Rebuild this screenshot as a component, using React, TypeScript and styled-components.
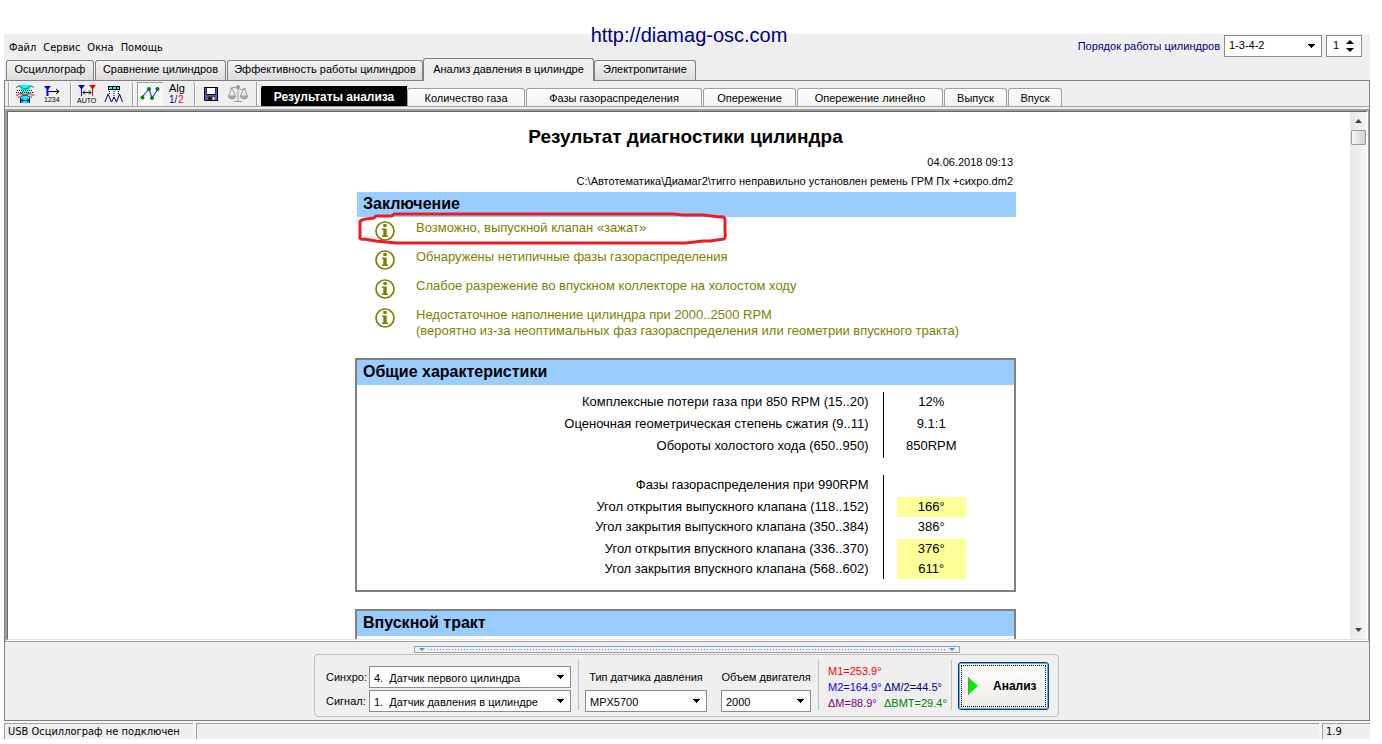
import React from "react";
import styled, { createGlobalStyle, css } from "styled-components";

const GlobalStyle = createGlobalStyle`
  *, *::before, *::after { box-sizing: border-box; }
  html, body, #root { height: 100%; }
  body { margin: 0; background: #fff; color: #000; font: 11px/16px "Liberation Sans", Arial, sans-serif; }
  button, input, select { font: inherit; color: inherit; }
  h1, h2, p, ul { margin: 0; padding: 0; }
`;

const Page = styled.div`
  position: relative;
  display: flex;
  flex-direction: column;
  height: 100%;
  padding: 34px 12px 5px 4px;
`;

const SiteLink = styled.a`
  position: absolute;
  top: 22px;
  left: 0;
  right: 4px;
  margin: 0 auto;
  width: max-content;
  font-size: 20px;
  line-height: 26px;
  color: #000080;
  text-decoration: none;
`;

const Window = styled.div`
  flex: 1;
  min-height: 0;
  display: flex;
  flex-direction: column;
  background: #efefef;
`;

const TopBar = styled.header`
  display: flex;
  justify-content: space-between;
  height: 24px;
  padding: 1px 8px 0 5px;
`;

const Menu = styled.nav`
  display: flex;
  gap: 7px;
  padding-top: 3px;
`;

const MenuItem = styled.button`
  border: 0;
  padding: 0;
  background: none;
  font-family: "DejaVu Sans Condensed", "DejaVu Sans", sans-serif;
  line-height: 16px;
`;

const OrderGroup = styled.div`
  display: flex;
  align-items: flex-start;
  gap: 4px;
`;

const OrderLabel = styled.label`
  color: #000080;
  line-height: 22px;
`;

const SelectBox = styled.span<{ $width: number }>`
  display: grid;
  align-items: center;
  width: ${(p) => p.$width}px;
  height: 22px;
  border: 1px solid #8c8c8c;
  background: #fff;

  > * { grid-area: 1 / 1; }
  > svg { justify-self: end; margin-right: 6px; pointer-events: none; }
`;

const SelectField = styled.select`
  appearance: none;
  width: 100%;
  height: 20px;
  border: 0;
  padding: 0 18px 2px 4px;
  background: transparent;
  white-space: pre;
`;

const Spinner = styled.div`
  display: flex;
  align-items: center;
  width: 36px;
  height: 22px;
  border: 1px solid #8c8c8c;
  background: #fff;
`;

const SpinnerInput = styled.input`
  width: 19px;
  border: 0;
  padding: 0 0 2px 6px;
  background: transparent;
`;

const SpinnerButtons = styled.div`
  display: flex;
  flex-direction: column;
  gap: 4px;
`;

const StepButton = styled.button`
  display: flex;
  border: 0;
  padding: 0;
  background: none;
`;

const MainTabs = styled.div`
  display: flex;
  align-items: flex-end;
  gap: 1px;
  height: 23px;
  padding: 0 2px;
  border-bottom: 1px solid #808080;
`;

const MainTab = styled.button<{ $width: number; $active?: boolean }>`
  flex: none;
  width: ${(p) => p.$width}px;
  height: 20px;
  border: 1px solid #808080;
  border-bottom: 0;
  border-radius: 3px 3px 0 0;
  padding: 0 0 2px;
  background: linear-gradient(#f4f4f4, #dcdcdc);
  line-height: 17px;

  ${(p) =>
    p.$active &&
    css`
      z-index: 1;
      height: 23px;
      margin: 0 -1px -1px;
      background: #efefef;
    `}
`;

const Workspace = styled.main`
  flex: 1;
  min-height: 0;
  display: flex;
  flex-direction: column;
  border: 1px solid #808080;
  border-top: 0;
`;

const Toolbar = styled.div`
  display: flex;
  align-items: flex-end;
  height: 26px;
  border-bottom: 1px solid #a0a0a0;
  padding-left: 3px;
`;

const ToolGroup = styled.div<{ $width: number; $gap?: number }>`
  display: flex;
  align-items: center;
  gap: ${(p) => p.$gap ?? 3}px;
  width: ${(p) => p.$width}px;
  height: 24px;
  padding-left: 4px;
  border-left: 1px solid #a0a0a0;
  box-shadow: inset 1px 0 #fff;
`;

const ToolButton = styled.button<{ $pressed?: boolean }>`
  display: grid;
  place-items: center;
  width: ${(p) => (p.$pressed ? 26 : 24)}px;
  height: 24px;
  border: 0;
  padding: 0;
  background: ${(p) =>
    p.$pressed
      ? "repeating-conic-gradient(#fff 0 25%, #efefef 0 50%) 0 0 / 2px 2px"
      : "none"};
  ${(p) => p.$pressed && "box-shadow: inset 1px 1px #a0a0a0;"}

  text { font-family: "Liberation Sans", Arial, sans-serif; }
`;

const ViewTabs = styled.div`
  display: flex;
  align-items: flex-end;
  gap: 1px;
`;

const ViewTab = styled.button<{ $width: number; $active?: boolean }>`
  flex: none;
  width: ${(p) => p.$width}px;
  height: 18px;
  border: 1px solid #a0a0a0;
  border-bottom: 0;
  border-radius: 3px 3px 0 0;
  padding: 0;
  background: linear-gradient(#fff, #f2f2f2);
  line-height: 18px;

  ${(p) =>
    p.$active &&
    css`
      height: 20px;
      margin-right: -1px;
      border-color: #000;
      border-radius: 2px 0 0 0;
      background: #000;
      color: #fff;
      font-size: 12px;
      font-weight: bold;
    `}
`;

const Frame = styled.section`
  flex: 1;
  min-height: 0;
  display: flex;
  margin-top: 2px;
  border: solid;
  border-width: 2px 1px 1px 2px;
  border-color: #a0a0a0 #a0a0a0 #fff #a0a0a0;
`;

const Viewport = styled.div`
  flex: 1;
  min-width: 0;
  display: flex;
  border: solid;
  border-width: 1px 2px 1px 1px;
  border-color: #696969 #fff #e3e3e3 #696969;
  background: #fff;
`;

const Scroller = styled.div`
  flex: 1;
  overflow: hidden;
  padding-left: 13px;
`;

const ScrollBar = styled.div`
  display: flex;
  flex-direction: column;
  align-items: center;
  width: 16px;
  padding: 7px 0;
  background: linear-gradient(90deg, #e8e8e8, #f4f4f4);
`;

const ScrollThumb = styled.div`
  width: 15px;
  height: 15px;
  margin: 7px 0 auto;
  border: 1px solid #989898;
  border-radius: 1px;
  background: linear-gradient(90deg, #f6f6f6, #d2d3d5);
`;

const Report = styled.article`
  width: 661px;
  margin: 0 auto;
`;

const ReportTitle = styled.h1`
  padding: 13px 0 2px;
  font-size: 19px;
  line-height: 24px;
  text-align: center;
`;

const ReportMeta = styled.p`
  padding: 4px 3px 0 0;
  line-height: 15px;
  text-align: right;
`;

const Findings = styled.section`
  padding: 3px 0 19px 2px;
`;

const Panel = styled.section`
  margin-bottom: 17px;
  border: 2px solid #808080;
`;

const SectionTitle = styled.h2`
  height: 25px;
  padding-left: 6px;
  background: #99ccff;
  font-size: 16px;
  line-height: 24px;
`;

const FindingList = styled.ul`
  list-style: none;
  padding: 3px 0 0 18px;
`;

const Finding = styled.li`
  position: relative;
  display: flex;
  gap: 21px;
  min-height: 29px;
  color: #808000;
  font-size: 13px;
  line-height: 16px;

  > svg { flex: none; }
`;

const Marker = styled.svg`
  position: absolute;
  left: -17px;
  top: -8px;
`;

const DataTable = styled.table`
  width: 100%;
  margin: 7px 0 17px;
  border-collapse: collapse;
  font-size: 13px;
  line-height: 20px;
  & + & { margin: 0 0 11px; }
`;

const LabelCell = styled.th<{ $tall?: boolean }>`
  padding: 0 14px ${(p) => (p.$tall ? 2 : 0)}px 0;
  border-right: 1px solid #000;
  font-weight: normal;
  text-align: right;
`;

const ValueCell = styled.td`
  width: 131px;
  padding: 0 48px 0 13px;
  vertical-align: top;
  text-align: center;
`;

const Value = styled.span<{ $warn?: boolean }>`
  display: block;
  height: 20px;
  background: ${(p) => (p.$warn ? "#ffff99" : "transparent")};
`;

const Dock = styled.footer`
  display: flex;
  flex-direction: column;
  align-items: center;
  border-top: 1px solid #a0a0a0;
  padding: 4px 1px 3px 0;
`;

const Splitter = styled.div`
  display: flex;
  align-items: center;
  gap: 3px;
  width: 546px;
  height: 7px;
  padding: 0 4px;
  border: 1px solid #a0a0a0;
  color: #3399ff;

  &::before, &::after {
    content: "";
    border: solid transparent;
    border-width: 3px 3px 0;
    border-top-color: currentColor;
  }
  > i { flex: 1; height: 1px; background: repeating-linear-gradient(90deg, currentColor 0 1px, transparent 1px 3px); }
`;

const Controls = styled.div`
  display: flex;
  width: 745px;
  height: 63px;
  margin-top: 1px;
  padding: 5px 9px 6px 11px;
  border: 1px solid #c0c0c0;
  border-radius: 4px;
`;

const ControlGroup = styled.div<{ $width: number }>`
  width: ${(p) => p.$width}px;
  padding: 6px 0 0 6px;
  border-left: 1px solid #c0c0c0;
`;

const SourceGroup = styled.div`
  display: grid;
  grid-template-columns: 43px auto;
  row-gap: 2px;
  align-content: start;
  width: 252px;
  padding-top: 6px;
  line-height: 22px;
`;

const PairGroup = styled(ControlGroup)`
  display: grid;
  grid-template-columns: 122px 90px;
  column-gap: 14px;
  row-gap: 2px;
  align-content: start;
  justify-items: center;
  line-height: 22px;
`;

const Readings = styled(ControlGroup)`
  display: grid;
  grid-template-columns: 56px auto;
  align-content: start;
  padding: 3px 0 0 9px;
  white-space: nowrap;
`;

const Reading = styled.span<{ $color: string; $wide?: boolean }>`
  color: ${(p) => p.$color};
  ${(p) => p.$wide && "grid-column: 1 / -1;"}
`;

const ActionGroup = styled(ControlGroup)`
  padding-top: 2px;
`;

const AnalyzeButton = styled.button`
  display: flex;
  align-items: center;
  gap: 15px;
  width: 91px;
  height: 48px;
  padding: 0 0 0 9px;
  border: 1px solid #003c74;
  border-radius: 3px;
  background: linear-gradient(#fff, #ecebe5);
  box-shadow: inset 0 0 0 1px #6ea8ea;
  outline: 1px dotted #000;
  outline-offset: -4px;
  font-size: 12px;
  font-weight: bold;
`;

const StatusBar = styled.div`
  display: flex;
  gap: 3px;
  height: 18px;
  padding-top: 2px;
  font-family: "DejaVu Sans Condensed", "DejaVu Sans", sans-serif;
  background: #f6f6f6;
`;

const StatusCell = styled.div<{ $width?: number }>`
  ${(p) => (p.$width ? `width: ${p.$width}px;` : "flex: 1;")}
  border: solid #a0a0a0;
  border-width: 1px 0 0 1px;
  padding-left: 3px;
  background: #efefef;
`;

const Caret = () => (
  <svg width="7" height="4" viewBox="0 0 7 4" shapeRendering="crispEdges" aria-hidden>
    <path d="M0 0H7L4 4H3Z" />
  </svg>
);

const StepArrow = ({ up }: { up?: boolean }) => (
  <svg width="8" height="4" viewBox="0 0 8 4" aria-hidden>
    <path d={up ? "M0 4L4 0L8 4Z" : "M0 0L4 4L8 0Z"} />
  </svg>
);

const ScrollArrow = ({ up }: { up?: boolean }) => (
  <svg width="7" height="4" viewBox="0 0 7 4" aria-hidden>
    <path d={up ? "M0 4L3.5 0L7 4Z" : "M0 0L3.5 4L7 0Z"} fill="#444" />
  </svg>
);

const InfoIcon = () => (
  <svg width="20" height="22" viewBox="0 0 20 22" aria-hidden>
    <circle cx="10" cy="11" r="9" fill="none" stroke="#808000" strokeWidth="1.7" />
    <path d="M8.300 4H11.700V7H8.300ZM7 8.500H11.700V15.500H13V17H7V15.500H8.300V10H7Z" fill="#808000" />
  </svg>
);

function Dropdown({ id, width, value }: { id: string; width: number; value: string }) {
  return (
    <SelectBox $width={width}>
      <SelectField id={id} defaultValue={value}>
        <option>{value}</option>
      </SelectField>
      <Caret />
    </SelectBox>
  );
}

const WaveIcon = () => (
  <svg width="20" height="20" viewBox="0 0 20 20" fill="none" aria-hidden>
    <path d="M5 1H15V5H14V9L15 11V19H5V11L6 9V5H5Z" fill="#00ffff" />
    <path d="M1 3.500C3 2 5 1.500 6 3C8 5.500 12 5.500 14 3C15 1.500 17 2 19 3.500" stroke="#008000" />
    <path d="M2 6.500H18M1 8.500H19" stroke="#000" strokeDasharray="1 1" />
    <path d="M1 11H3L6 9L9 11H11L14 9L17 11H19M3 13H6L8 11.500H12L14 13H17" stroke="#f00" />
    <path d="M5.500 14V19M14.500 14V19M6 16.500H14M8 14.500L6 16.500L8 18.500M12 14.500L14 16.500L12 18.500" stroke="#0000a0" />
  </svg>
);

const NumberedIcon = () => (
  <svg width="18" height="20" viewBox="0 0 18 20" fill="none" aria-hidden>
    <path d="M1 2H8L5.500 5V12H3.500V5Z" fill="#0000ff" />
    <path d="M5 7.500H16M13 5L16 7.500L13 10" stroke="#000" />
    <text x="1" y="18" fontSize="7" fill="#000">1234</text>
  </svg>
);

const AutoIcon = () => (
  <svg width="20" height="20" viewBox="0 0 20 20" fill="none" aria-hidden>
    <path d="M1 1H8L5 5V12H4V5Z" fill="#0000ff" />
    <path d="M12 1H19L16 5V12H15V5Z" fill="#f00" />
    <path d="M6 8.500H14M8 6.500L6 8.500L8 10.500M12 6.500L14 8.500L12 10.500" stroke="#000" />
    <text x="0" y="19" fontSize="7" fill="#000">AUTO</text>
  </svg>
);

const PeaksIcon = () => (
  <svg width="20" height="20" viewBox="0 0 20 20" fill="none" aria-hidden>
    <path d="M4 2H16V6H4Z" fill="#000" />
    <path d="M5 3H8V5H5ZM9 3H12V5H9ZM13 3H15V5H13Z" fill="#00ffff" />
    <path d="M5.500 7V11M10 7V15M14.500 7V11" stroke="#000" strokeDasharray="1 1" />
    <path d="M1 18L4 10L7.500 18L10 13L12.500 18L15.500 10L18.500 18" stroke="#000080" />
  </svg>
);

const GraphIcon = () => (
  <svg width="20" height="20" viewBox="0 0 20 20" fill="none" aria-hidden>
    <path d="M2 13L9 5L12 14L18 5" stroke="#0000ff" />
    <g fill="#008000">
      <circle cx="2.500" cy="13.500" r="2" />
      <circle cx="9" cy="5" r="2" />
      <circle cx="12" cy="14" r="2" />
      <circle cx="17.500" cy="5" r="2" />
    </g>
  </svg>
);

const AlgIcon = () => (
  <svg width="20" height="22" viewBox="0 0 20 22" aria-hidden>
    <text x="3" y="9" fontSize="11">Alg</text>
    <text x="3" y="20" fontSize="10" fill="#000080">1/</text>
    <text x="12" y="20" fontSize="10" fill="#ff0000">2</text>
  </svg>
);

const DiskIcon = () => (
  <svg width="16" height="16" viewBox="0 0 16 16" aria-hidden>
    <path d="M1 1H15V15H2L1 14Z" fill="#000" />
    <path d="M2 2H3.500V9H12.500V2H14V14H2Z" fill="#5060b8" />
    <path d="M4 2H12V8H4Z" fill="#fff" />
    <path d="M5 10.500H12V14H5Z" fill="#222" />
    <path d="M9.500 11H11.500V14H9.500Z" fill="#fff" />
  </svg>
);

const ScalesIcon = () => (
  <svg width="22" height="20" viewBox="0 0 22 20" fill="none" stroke="#9a9a9a" aria-hidden>
    <path d="M11 2V17M7 17.500H15M3 4.500Q7 2 11 4.500T19 4.500M5 4L1.500 12M5 4L8.500 12M17 4L13.500 12M17 4L20.500 12" />
    <path d="M1 12H9Q8 15 5 15T1 12ZM13 12H21Q20 15 17 15T13 12Z" fill="#aaa" />
    <circle cx="11" cy="3" r="1.500" fill="#9a9a9a" />
  </svg>
);

const mainTabs = [
  { label: "Осциллограф", width: 88 },
  { label: "Сравнение цилиндров", width: 131 },
  { label: "Эффективность работы цилиндров", width: 196 },
  { label: "Анализ давления в цилиндре", width: 171, active: true },
  { label: "Электропитание", width: 102 },
];

const viewTabs = [
  { label: "Результаты анализа", width: 146, active: true },
  { label: "Количество газа", width: 118 },
  { label: "Фазы газораспределения", width: 176 },
  { label: "Опережение", width: 93 },
  { label: "Опережение линейно", width: 146 },
  { label: "Выпуск", width: 63 },
  { label: "Впуск", width: 54 },
];

const findings = [
  ["Возможно, выпускной клапан «зажат»"],
  ["Обнаружены нетипичные фазы газораспределения"],
  ["Слабое разрежение во впускном коллекторе на холостом ходу"],
  [
    "Недостаточное наполнение цилиндра при 2000..2500 RPM",
    "(вероятно из-за неоптимальных фаз газораспределения или геометрии впускного тракта)",
  ],
];

type Row = { label: string; value: string; warn?: boolean; tall?: boolean };

const general: Row[] = [
  { label: "Комплексные потери газа при 850 RPM (15..20)", value: "12%", tall: true },
  { label: "Оценочная геометрическая степень сжатия (9..11)", value: "9.1:1", tall: true },
  { label: "Обороты холостого хода (650..950)", value: "850RPM", tall: true },
];

const phases: Row[] = [
  { label: "Фазы газораспределения при 990RPM", value: "", tall: true },
  { label: "Угол открытия выпускного клапана (118..152)", value: "166°", warn: true },
  { label: "Угол закрытия выпускного клапана (350..384)", value: "386°", tall: true },
  { label: "Угол открытия впускного клапана (336..370)", value: "376°", warn: true },
  { label: "Угол закрытия впускного клапана (568..602)", value: "611°", warn: true },
];

const Rows = ({ rows }: { rows: Row[] }) => (
  <DataTable>
    <tbody>
      {rows.map((r) => (
        <tr key={r.label}>
          <LabelCell scope="row" $tall={r.tall}>{r.label}</LabelCell>
          <ValueCell>
            <Value $warn={r.warn}>{r.value}</Value>
          </ValueCell>
        </tr>
      ))}
    </tbody>
  </DataTable>
);

export default function App() {
  return (
    <Page>
      <GlobalStyle />
      <Window>
        <TopBar>
          <Menu>
            {["Файл", "Сервис", "Окна", "Помощь"].map((m) => (
              <MenuItem key={m}>{m}</MenuItem>
            ))}
          </Menu>
          <OrderGroup>
            <OrderLabel htmlFor="order">Порядок работы цилиндров</OrderLabel>
            <Dropdown id="order" width={98} value="1-3-4-2" />
            <Spinner>
              <SpinnerInput aria-label="Номер цилиндра" defaultValue="1" />
              <SpinnerButtons>
                <StepButton aria-label="Больше"><StepArrow up /></StepButton>
                <StepButton aria-label="Меньше"><StepArrow /></StepButton>
              </SpinnerButtons>
            </Spinner>
          </OrderGroup>
        </TopBar>
        <MainTabs>
          {mainTabs.map((t) => (
            <MainTab key={t.label} $width={t.width} $active={t.active}>{t.label}</MainTab>
          ))}
        </MainTabs>
        <Workspace>
          <Toolbar>
            <ToolGroup $width={62}>
              <ToolButton aria-label="Фазы"><WaveIcon /></ToolButton>
              <ToolButton aria-label="Номера цилиндров"><NumberedIcon /></ToolButton>
            </ToolGroup>
            <ToolGroup $width={62}>
              <ToolButton aria-label="Авто"><AutoIcon /></ToolButton>
              <ToolButton aria-label="Пики"><PeaksIcon /></ToolButton>
            </ToolGroup>
            <ToolGroup $width={62} $gap={1}>
              <ToolButton aria-label="График" $pressed><GraphIcon /></ToolButton>
              <ToolButton aria-label="Алгоритм"><AlgIcon /></ToolButton>
            </ToolGroup>
            <ToolGroup $width={62}>
              <ToolButton aria-label="Сохранить"><DiskIcon /></ToolButton>
              <ToolButton aria-label="Сравнить"><ScalesIcon /></ToolButton>
            </ToolGroup>
            <ToolGroup $width={5} />
            <ViewTabs>
              {viewTabs.map((t) => (
                <ViewTab key={t.label} $width={t.width} $active={t.active}>{t.label}</ViewTab>
              ))}
            </ViewTabs>
          </Toolbar>
          <Frame>
            <Viewport>
              <Scroller>
                <Report>
                  <ReportTitle>Результат диагностики цилиндра</ReportTitle>
                  <ReportMeta>04.06.2018 09:13</ReportMeta>
                  <ReportMeta>C:\Автотематика\Диамаг2\тигго неправильно установлен ремень ГРМ Пх +сихро.dm2</ReportMeta>
                  <Findings>
                    <SectionTitle>Заключение</SectionTitle>
                    <FindingList>
                      {findings.map((lines, i) => (
                        <Finding key={i}>
                          <InfoIcon />
                          <div>
                            {lines.map((l) => (
                              <p key={l}>{l}</p>
                            ))}
                          </div>
                          {i === 0 && (
                            <Marker width="370" height="34" viewBox="0 0 370 34" fill="none" aria-hidden>
                              <path
                                d="M16 6C4 7 1 8 2 12V24Q1 28 6 27L18 29L38 31H328L345 29H352L366 27Q368 26 367 20V8Q367 4 362 5L345 3L325 3L315 2H36L34 4H18Z"
                                stroke="#ed1c24"
                                strokeWidth="3"
                                strokeLinejoin="round"
                              />
                            </Marker>
                          )}
                        </Finding>
                      ))}
                    </FindingList>
                  </Findings>
                  <Panel>
                    <SectionTitle>Общие характеристики</SectionTitle>
                    <Rows rows={general} />
                    <Rows rows={phases} />
                  </Panel>
                  <Panel>
                    <SectionTitle>Впускной тракт</SectionTitle>
                    <Rows rows={[]} />
                  </Panel>
                </Report>
              </Scroller>
              <ScrollBar>
                <ScrollArrow up />
                <ScrollThumb />
                <ScrollArrow />
              </ScrollBar>
            </Viewport>
          </Frame>
          <Dock>
            <Splitter><i /></Splitter>
            <Controls>
              <SourceGroup>
                <label htmlFor="sync">Синхро:</label>
                <Dropdown id="sync" width={202} value={"4.\u00a0 Датчик первого цилиндра"} />
                <label htmlFor="signal">Сигнал:</label>
                <Dropdown id="signal" width={202} value={"1.\u00a0 Датчик давления в цилиндре"} />
              </SourceGroup>
              <PairGroup $width={240}>
                <label htmlFor="sensor">Тип датчика давления</label>
                <label htmlFor="volume">Объем двигателя</label>
                <Dropdown id="sensor" width={122} value="MPX5700" />
                <Dropdown id="volume" width={90} value="2000" />
              </PairGroup>
              <Readings $width={133}>
                <Reading $color="#ff0000" $wide>M1=253.9°</Reading>
                <Reading $color="#0000ff">M2=164.9°</Reading>
                <Reading $color="#000080">ΔM/2=44.5°</Reading>
                <Reading $color="#800080">ΔM=88.9°</Reading>
                <Reading $color="#008000">ΔBMT=29.4°</Reading>
              </Readings>
              <ActionGroup $width={98}>
                <AnalyzeButton>
                  <svg width="10" height="18" viewBox="0 0 10 18" aria-hidden>
                    <path d="M0 0L10 9L0 18Z" fill="#00ee00" />
                    <path d="M0.500 0V18" stroke="#808080" />
                  </svg>
                  Анализ
                </AnalyzeButton>
              </ActionGroup>
            </Controls>
          </Dock>
        </Workspace>
        <StatusBar>
          <StatusCell $width={189}>USB Осциллограф не подключен</StatusCell>
          <StatusCell />
          <StatusCell $width={48}>1.9</StatusCell>
        </StatusBar>
      </Window>
      <SiteLink href="http://diamag-osc.com">http://diamag-osc.com</SiteLink>
    </Page>
  );
}
